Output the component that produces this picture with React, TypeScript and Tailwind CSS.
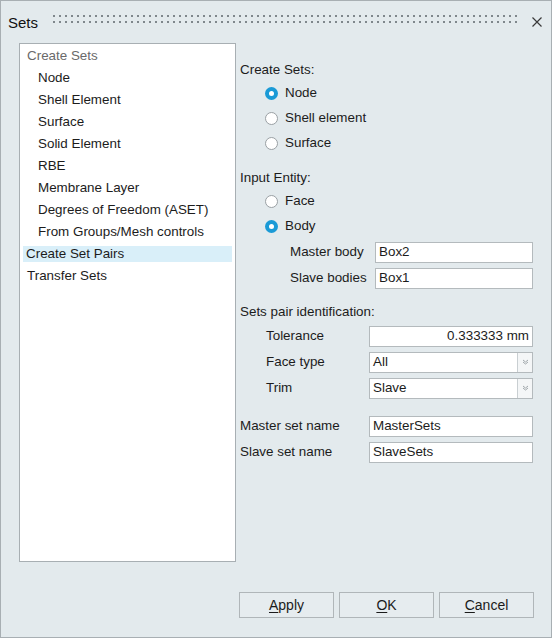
import React from 'react';

const font = { fontFamily: '"Liberation Sans", Arial, sans-serif' };

function Radio({ label, checked }: { label: string; checked?: boolean }) {
  return (
    <div className="flex h-[25px] items-center pl-[25px]">
      {checked ? (
        <span className="flex h-[13px] w-[13px] items-center justify-center rounded-full bg-[#1a9ad6]">
          <span className="h-[5px] w-[5px] rounded-full bg-white" />
        </span>
      ) : (
        <span className="h-[13px] w-[13px] rounded-full border border-[#9aa0a4] bg-white" />
      )}
      <span className="ml-[7px]">{label}</span>
    </div>
  );
}

function Field({ value, align = 'left' }: { value: string; align?: 'left' | 'right' }) {
  return (
    <div
      className={
        'flex h-[21px] flex-1 items-center border border-[#b4babd] bg-white px-[3px] ' +
        (align === 'right' ? 'justify-end' : '')
      }
    >
      {value}
    </div>
  );
}

function Select({ value }: { value: string }) {
  return (
    <div className="flex h-[21px] flex-1 border border-[#b4babd] bg-white">
      <div className="flex flex-1 items-center px-[3px]">{value}</div>
      <div className="flex w-[15px] items-center justify-center border-l border-[#c9cfd2] bg-[#f4f6f7]">
        <svg width="7" height="6" viewBox="0 0 7 6">
          <path d="M1 1 L3.5 3 L6 1 M1 3 L3.5 5 L6 3" fill="none" stroke="#a0a7ab" strokeWidth="1" />
        </svg>
      </div>
    </div>
  );
}

function Button({ first, rest }: { first: string; rest: string }) {
  return (
    <button className="flex h-[26px] w-[95px] items-center justify-center border border-[#b0b6b9] bg-[#e6ecef] text-[14px] text-[#1b1b1b]">
      <span className="underline underline-offset-2">{first}</span>
      {rest}
    </button>
  );
}

const tree = [
  'Node',
  'Shell Element',
  'Surface',
  'Solid Element',
  'RBE',
  'Membrane Layer',
  'Degrees of Freedom (ASET)',
  'From Groups/Mesh controls',
];

export default function App() {
  return (
    <div
      style={font}
      className="flex h-[638px] w-[552px] flex-col border border-[#a8afb3] bg-[#e3eaed] text-[13.4px] text-[#1c1c1c]"
    >
      {/* Title bar */}
      <div className="flex h-[42px] shrink-0 items-center pl-[7px] pr-[8px]">
        <span className="text-[15px] leading-none text-[#111]">Sets</span>
        <svg className="mb-[6px] ml-[15px] h-[8px] flex-1" shapeRendering="crispEdges">
          <defs>
            <pattern id="grip" width="6" height="6" patternUnits="userSpaceOnUse">
              <rect x="0" y="0" width="2" height="2" fill="#7f878c" />
            </pattern>
          </defs>
          <rect x="0" y="0" width="100%" height="8" fill="url(#grip)" />
        </svg>
        <svg className="ml-[12px]" width="12" height="12" viewBox="0 0 12 12">
          <path d="M1.5 1.5 L10.5 10.5 M10.5 1.5 L1.5 10.5" stroke="#3a3a3a" strokeWidth="1.2" />
        </svg>
      </div>

      {/* Body */}
      <div className="flex">
        <div className="ml-[18px] flex h-[519px] w-[217px] shrink-0 flex-col border border-[#a8afb3] bg-white pt-[1px]">
          <div className="flex h-[22px] items-center pl-[7px] text-[#6a6a6a]">Create Sets</div>
          {tree.map((t) => (
            <div key={t} className="flex h-[22px] items-center pl-[18px]">
              {t}
            </div>
          ))}
          <div className="mx-[3px] my-[3px] flex h-[16px] items-center bg-[#d9eff9] pl-[3px]">Create Set Pairs</div>
          <div className="mt-[1px] flex h-[21px] items-center pl-[7px]">Transfer Sets</div>
        </div>

        <div className="ml-[4px] flex w-[293px] flex-col pt-[17px]">
          <div className="flex h-[21px] items-center">Create Sets:</div>
          <Radio label="Node" checked />
          <Radio label="Shell element" />
          <Radio label="Surface" />

          <div className="mt-[12px] flex h-[21px] items-center">Input Entity:</div>
          <Radio label="Face" />
          <Radio label="Body" checked />
          <div className="flex h-[26px] items-center pl-[50px]">
            <span className="w-[85px]">Master body</span>
            <Field value="Box2" />
          </div>
          <div className="flex h-[26px] items-center pl-[50px]">
            <span className="w-[85px]">Slave bodies</span>
            <Field value="Box1" />
          </div>

          <div className="mt-[11px] flex h-[21px] items-center">Sets pair identification:</div>
          <div className="flex h-[26px] items-center pl-[26px]">
            <span className="w-[103px]">Tolerance</span>
            <Field value="0.333333 mm" align="right" />
          </div>
          <div className="flex h-[26px] items-center pl-[26px]">
            <span className="w-[103px]">Face type</span>
            <Select value="All" />
          </div>
          <div className="flex h-[26px] items-center pl-[26px]">
            <span className="w-[103px]">Trim</span>
            <Select value="Slave" />
          </div>

          <div className="mt-[12px] flex h-[26px] items-center">
            <span className="w-[129px]">Master set name</span>
            <Field value="MasterSets" />
          </div>
          <div className="flex h-[26px] items-center">
            <span className="w-[129px]">Slave set name</span>
            <Field value="SlaveSets" />
          </div>
        </div>
      </div>

      {/* Footer */}
      <div className="mt-[30px] flex justify-end gap-[5px] pr-[17px]">
        <Button first="A" rest="pply" />
        <Button first="O" rest="K" />
        <Button first="C" rest="ancel" />
      </div>
    </div>
  );
}
